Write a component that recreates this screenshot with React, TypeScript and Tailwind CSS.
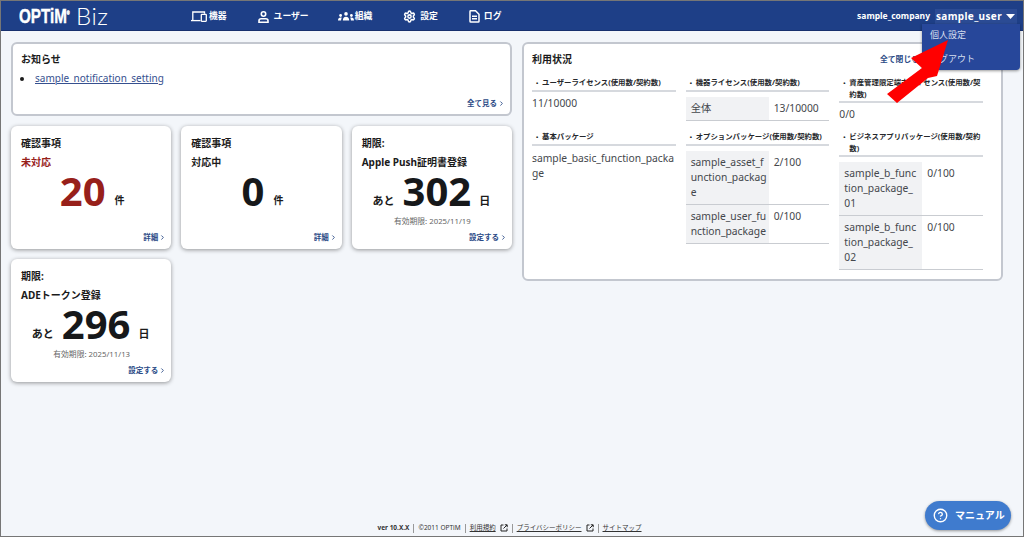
import { ChevronRight, CircleHelp, Settings } from "lucide-react";

const FONT = { fontFamily: '"Noto Sans", "Noto Sans CJK JP", sans-serif' };

function DeviceIcon() {
  return (
    <svg width="16" height="11" viewBox="0 0 16 11" fill="none" stroke="white" strokeWidth="1.300">
      <path d="M1.800 9V1H13.500V2.800" />
      <path d="M0 9.600H9.500" />
      <rect x="10.300" y="3.400" width="5" height="6.900" rx="0.500" />
    </svg>
  );
}

function UserIcon() {
  return (
    <svg width="11" height="12" viewBox="0 0 11 12" fill="none" stroke="white" strokeWidth="1.600">
      <circle cx="5.500" cy="3" r="2.200" />
      <path d="M1 11.200V9.800C1 8.500 2 7.800 3.200 7.800H7.800C9 7.800 10 8.500 10 9.800V11.200Z" />
    </svg>
  );
}

function GroupIcon() {
  return (
    <svg width="16" height="9" viewBox="0 0 16 9" fill="white">
      <circle cx="8" cy="1.900" r="1.800" />
      <path d="M4.800 8.500c0-2.500 1.200-3.800 3.200-3.800s3.200 1.300 3.200 3.800z" />
      <circle cx="2.600" cy="3.500" r="1.400" />
      <path d="M0 8.500c0-1.900.9-3 2.600-3 .5 0 .9.100 1.200.3-.5.700-.7 1.600-.7 2.700z" />
      <circle cx="13.400" cy="3.500" r="1.400" />
      <path d="M16 8.500c0-1.900-.9-3-2.600-3-.5 0-.9.100-1.200.3.500.7.700 1.600.700 2.700z" />
    </svg>
  );
}

function DocIcon() {
  return (
    <svg width="11" height="13" viewBox="0 0 11 13" fill="none" stroke="white" strokeWidth="1.500">
      <path d="M1 1.500C1 1 1.300.8 1.800.8H6.500L10 4.300V11.200C10 11.700 9.700 12 9.200 12H1.800C1.300 12 1 11.700 1 11.200Z" />
      <path d="M3 6.300H8M3 8.800H8" />
    </svg>
  );
}

function NavItem({ icon, label, cls }: { icon: React.ReactNode; label: string; cls: string }) {
  return (
    <div className={`flex items-center ${cls} text-[8.800px] font-bold text-white`}>
      {icon}
      <span>{label}</span>
    </div>
  );
}

function MoreLink({ label }: { label: string }) {
  return (
    <div className="flex items-center justify-end gap-[1px] text-[7.500px] leading-[12px] font-bold text-[#2a4a86]">
      <span>{label}</span>
      <ChevronRight size={7} strokeWidth={3} />
    </div>
  );
}

const CARD = "flex h-[123px] flex-col rounded-md bg-white pt-[10px] pr-[5px] pb-[6px] pl-[10px] shadow-[0_1px_4px_rgba(0,0,0,0.4)]";

function CountCard({ sub, count, red }: { sub: string; count: string; red?: boolean }) {
  return (
    <div className={CARD}>
      <div className="text-[10px] leading-[14px] font-bold text-[#1b1b1b]">確認事項</div>
      <div className={`mt-[5px] text-[10px] leading-[14px] font-bold ${red ? "text-[#97201a]" : "text-[#1b1b1b]"}`}>{sub}</div>
      <div className="mt-[1px] flex items-end justify-center gap-[9px] pr-[3px]">
        <span className={`text-[40px] leading-[42px] font-bold ${red ? "text-[#97201a]" : "text-[#16181a]"}`}>{count}</span>
        <span className="pb-[5px] text-[10px] leading-[14px] font-bold text-[#1b1b1b]">件</span>
      </div>
      <div className="mt-auto">
        <MoreLink label="詳細" />
      </div>
    </div>
  );
}

function LimitCard({ sub, days, date }: { sub: string; days: string; date: string }) {
  return (
    <div className={CARD}>
      <div className="text-[10px] leading-[14px] font-bold text-[#1b1b1b]">期限:</div>
      <div className="mt-[5px] text-[10px] leading-[14px] font-bold text-[#1b1b1b]">{sub}</div>
      <div className="mt-[1px] flex items-end justify-center gap-[8px] pr-[6px]">
        <span className="pb-[4px] text-[11px] leading-[14px] font-bold text-[#1b1b1b]">あと</span>
        <span className="text-[40px] leading-[42px] font-bold text-[#16181a]">{days}</span>
        <span className="pb-[4px] text-[11px] leading-[14px] font-bold text-[#1b1b1b]">日</span>
      </div>
      <div className="mt-[3px] pr-[4px] text-center text-[7.800px] leading-[12px] text-[#666]">有効期限: {date}</div>
      <div className="mt-auto">
        <MoreLink label="設定する" />
      </div>
    </div>
  );
}

function Heading({ lines }: { lines: string[] }) {
  return (
    <div className="border-b-2 border-[#d6d9de] pb-[1px] pl-[4px] text-[7.400px] leading-[11px] font-bold whitespace-nowrap text-[#26282c]">
      <span className="inline-block w-[6px] text-[6px]">•</span>
      {lines[0]}
      {lines[1] && <div className="pl-[6px]">{lines[1]}</div>}
    </div>
  );
}

function LicenseTable({ rows }: { rows: [string, string][] }) {
  return (
    <div className="mt-[5px]">
      {rows.map(([a, b]) => (
        <div key={a} className="flex border-b border-[#c9ccd1] text-[10.300px] leading-[15px] text-[#44474c]">
          <div className="w-[83px] shrink-0 bg-[#f1f2f4] px-[5px] py-[4px] whitespace-pre-line">{a}</div>
          <div className="px-[5px] py-[4px]">{b}</div>
        </div>
      ))}
    </div>
  );
}

function ExtIcon() {
  return (
    <svg width="8" height="8" viewBox="0 0 8 8" fill="none" stroke="#222" strokeWidth="1">
      <path d="M3.500 1H1V7H7V4.500" />
      <path d="M3.500 4.500L7 1M4.800 .8H7.200V3.200" />
    </svg>
  );
}

export default function App() {
  return (
    <div style={FONT} className="relative flex h-[537px] w-[1024px] flex-col overflow-hidden border border-[#767676] bg-[#f3f6fa]">
      <header className="flex h-[30px] shrink-0 items-center border-b border-[#17306d] bg-[#1e3f87] text-white">
        <div className="flex w-[190px] items-center pl-[18px]">
          <span style={{ fontFamily: '"Liberation Sans", sans-serif' }} className="w-[57px] origin-left scale-x-[0.76] text-[20px] leading-none font-bold whitespace-nowrap [-webkit-text-stroke:0.4px_white]">
            OPTiM<span className="align-super text-[5px]">®</span>
          </span>
          <span style={{ fontFamily: '"Lato", sans-serif' }} className="text-[24px] leading-none font-light tracking-[0.5px]">Biz</span>
        </div>
        <nav className="mt-[2px] flex items-center">
          <NavItem cls="gap-[2px]" icon={<DeviceIcon />} label="機器" />
          <NavItem cls="gap-[5px] ml-[31px]" icon={<UserIcon />} label="ユーザー" />
          <NavItem cls="gap-[1px] ml-[29px]" icon={<GroupIcon />} label="組織" />
          <NavItem cls="gap-[4px] ml-[31px]" icon={<Settings size={13} strokeWidth={2.800} />} label="設定" />
          <NavItem cls="gap-[4px] ml-[31px]" icon={<DocIcon />} label="ログ" />
        </nav>
        <div className="mt-[2px] ml-auto flex items-center gap-[5px] pr-[6px]">
          <span className="text-[8.500px] font-bold">sample_company</span>
          <span className="flex h-[15px] w-[82px] items-center gap-[4px] bg-[#2b4b94] pl-[1px] text-[10px] font-bold tracking-[0.35px]">
            sample_user
            <svg width="9" height="5" viewBox="0 0 9 5" fill="white"><path d="M0 0h9L4.500 5z" /></svg>
          </span>
        </div>
      </header>

      <main className="flex flex-1 items-start gap-[10px] px-[10px] pt-[11px]">
        <div className="flex w-[501px] flex-col gap-[10px]">
          <section className="flex h-[74px] flex-col rounded-md border-2 border-[#c3c7cf] bg-white pt-[8px] pr-[5px] pb-[5px] pl-[8px]">
            <div className="text-[10px] leading-[14px] font-bold text-[#1b1b1b]">お知らせ</div>
            <ul className="mt-[5px] list-disc pl-[13px] text-[10px] leading-[15px] text-[#1b1b1b]">
              <li className="pl-[1px]"><span className="text-[#36508f] underline">sample_notification_setting</span></li>
            </ul>
            <div className="mt-auto"><MoreLink label="全て見る" /></div>
          </section>
          <div className="grid grid-cols-3 gap-[10px]">
            <CountCard sub="未対応" count="20" red />
            <CountCard sub="対応中" count="0" />
            <LimitCard sub="Apple Push証明書登録" days="302" date="2025/11/19" />
            <LimitCard sub="ADEトークン登録" days="296" date="2025/11/13" />
          </div>
        </div>

        <section className="h-[239px] w-[481px] rounded-md border-2 border-[#c3c7cf] bg-white pt-[8px] pr-[18px] pl-[8px]">
          <div className="flex items-center justify-between">
            <div className="text-[10px] leading-[14px] font-bold text-[#1b1b1b]">利用状況</div>
            <div className="pr-[64px] text-[7.800px] leading-[14px] font-bold text-[#2a4a86]">全て閉じる</div>
          </div>
          <div className="mt-[11px] grid grid-cols-3 gap-x-[10px]">
            <div className="h-[54px]">
              <Heading lines={["ユーザーライセンス(使用数/契約数)"]} />
              <div className="mt-[4px] text-[10.300px] leading-[15px] text-[#44474c]">11/10000</div>
            </div>
            <div className="h-[54px]">
              <Heading lines={["機器ライセンス(使用数/契約数)"]} />
              <LicenseTable rows={[["全体", "13/10000"]]} />
            </div>
            <div className="h-[54px]">
              <Heading lines={["資産管理限定端末ライセンス(使用数/契", "約数)"]} />
              <div className="mt-[4px] text-[10.300px] leading-[15px] text-[#44474c]">0/0</div>
            </div>
            <div>
              <Heading lines={["基本パッケージ"]} />
              <div className="mt-[5px] text-[10.300px] leading-[15px] whitespace-pre-line text-[#44474c]">{"sample_basic_function_packa\nge"}</div>
            </div>
            <div>
              <Heading lines={["オプションパッケージ(使用数/契約数)"]} />
              <LicenseTable rows={[["sample_asset_f\nunction_packag\ne", "2/100"], ["sample_user_fu\nnction_package", "0/100"]]} />
            </div>
            <div>
              <Heading lines={["ビジネスアプリパッケージ(使用数/契約", "数)"]} />
              <LicenseTable rows={[["sample_b_func\ntion_package_\n01", "0/100"], ["sample_b_func\ntion_package_\n02", "0/100"]]} />
            </div>
          </div>
        </section>
      </main>

      <footer className="flex h-[15px] shrink-0 items-center justify-center gap-[4px] pr-[5px] pb-[1px] text-[6.500px] text-[#333]">
        <span className="font-bold">ver 10.X.X</span>
        <span className="h-[9px] border-l border-[#999]" />
        <span>©2011 OPTiM</span>
        <span className="h-[9px] border-l border-[#999]" />
        <span className="underline">利用規約</span>
        <ExtIcon />
        <span className="h-[9px] border-l border-[#999]" />
        <span className="underline">プライバシーポリシー</span>
        <ExtIcon />
        <span className="h-[9px] border-l border-[#999]" />
        <span className="underline">サイトマップ</span>
      </footer>

      <div className="absolute top-[23px] right-[3px] z-10 h-[46px] w-[98px] rounded-b-sm bg-[#27479a] pl-[8px] text-[9px] leading-[14px] text-[#d6deef] shadow-[0_1px_3px_rgba(0,0,0,0.4)]">
        <div className="pt-[4px]">個人設定</div>
        <div className="mt-[10px]">ログアウト</div>
      </div>

      <div className="absolute right-[12px] bottom-[6px] z-10 flex h-[29px] w-[86px] items-center gap-[7px] rounded-full bg-[#3f7bce] pl-[8px] text-[10px] font-bold text-white shadow-[0_1px_3px_rgba(0,0,0,0.4)]">
        <CircleHelp size={15} strokeWidth={2.200} />
        <span>マニュアル</span>
      </div>

      <svg className="absolute top-[-1px] left-[-1px] z-20" width="1024" height="537" viewBox="0 0 1024 537">
        <polygon points="948,40 911,58 922,68 887,94 897,103 928,78 937,76" fill="#ff0000" />
      </svg>
    </div>
  );
}
